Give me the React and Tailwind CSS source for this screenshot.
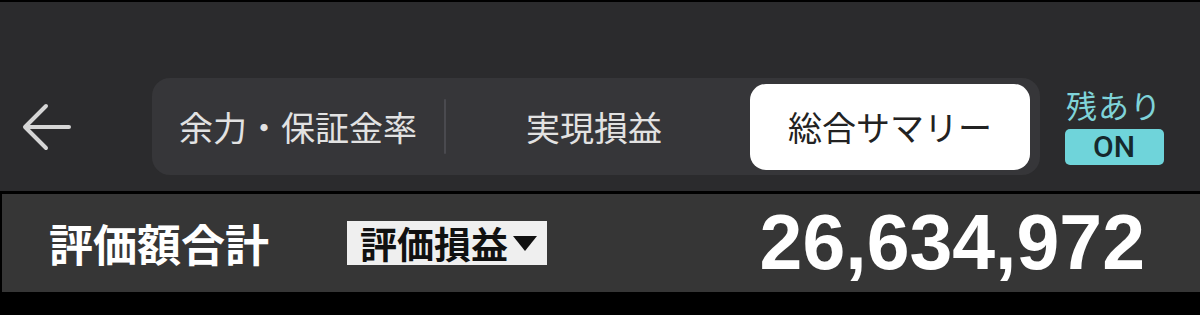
const JP = { fontFamily: '"Noto Sans CJK JP", "Noto Sans", sans-serif' }

function BackArrow() {
  return (
    <svg width="52" height="50" viewBox="0 0 52 50" fill="none">
      <path d="M48 25H5M25 4L4 25L25 46" stroke="#d6d6d6" strokeWidth="4" strokeLinecap="round" strokeLinejoin="round" />
    </svg>
  )
}

function Tabs() {
  return (
    <div className="flex items-center w-[888px] h-[97px] rounded-[18px] bg-[#363639] pr-[10px]">
      <div className="w-[292px] flex justify-center text-[34px] text-[#e2e2e2] leading-none">
        余力・保証金率
      </div>
      <div className="w-[2px] h-[55px] bg-[#4a4a4f] rounded-full" />
      <div className="w-[304px] flex justify-center text-[34px] text-[#e2e2e2] leading-none pr-[8px]">
        実現損益
      </div>
      <div className="w-[280px] h-[86px] rounded-[16px] bg-white flex items-center justify-center text-[34px] text-[#222222] leading-none">
        総合サマリー
      </div>
    </div>
  )
}

export default function App() {
  return (
    <div className="w-[1200px] h-[315px] bg-black pt-[2px] overflow-hidden" style={JP}>
      <div className="h-[189px] bg-[#2b2b2d] flex items-center pt-[60px] pl-[21px]">
        <BackArrow />
        <div className="ml-[79px]">
          <Tabs />
        </div>
        <div className="ml-[24px] flex flex-col items-center w-[100px]">
          <div className="text-[31px] leading-none text-[#7fd3d9] tracking-[1px]">残あり</div>
          <div className="mt-[9px] w-[99px] h-[36px] rounded-[5px] bg-[#6fd4da] flex items-center justify-center text-[30px] font-medium text-[#16282c] leading-none" style={{ fontFamily: 'Roboto, "Liberation Sans", sans-serif' }}>
            ON
          </div>
        </div>
      </div>
      <div className="mt-[3px] h-[98px] bg-[#363636] border-l-[2px] border-black flex items-center pl-[47px] pr-[55px]">
        <div className="text-[44px] font-bold text-white leading-none">評価額合計</div>
        <div className="ml-[78px] h-[44px] bg-[#efefef] flex items-center pl-[13px] pr-[8px] text-[37px] font-bold text-[#111] leading-none">
          評価損益
          <svg width="28" height="20" viewBox="0 0 28 20" className="ml-[3px]">
            <path d="M2 3H26L14 18Z" fill="#111" />
          </svg>
        </div>
        <div className="ml-auto text-[77px] font-bold text-white leading-none pb-[2px]" style={{ fontFamily: '"Liberation Sans", Arial, sans-serif' }}>
          26,634,972
        </div>
      </div>
    </div>
  )
}
